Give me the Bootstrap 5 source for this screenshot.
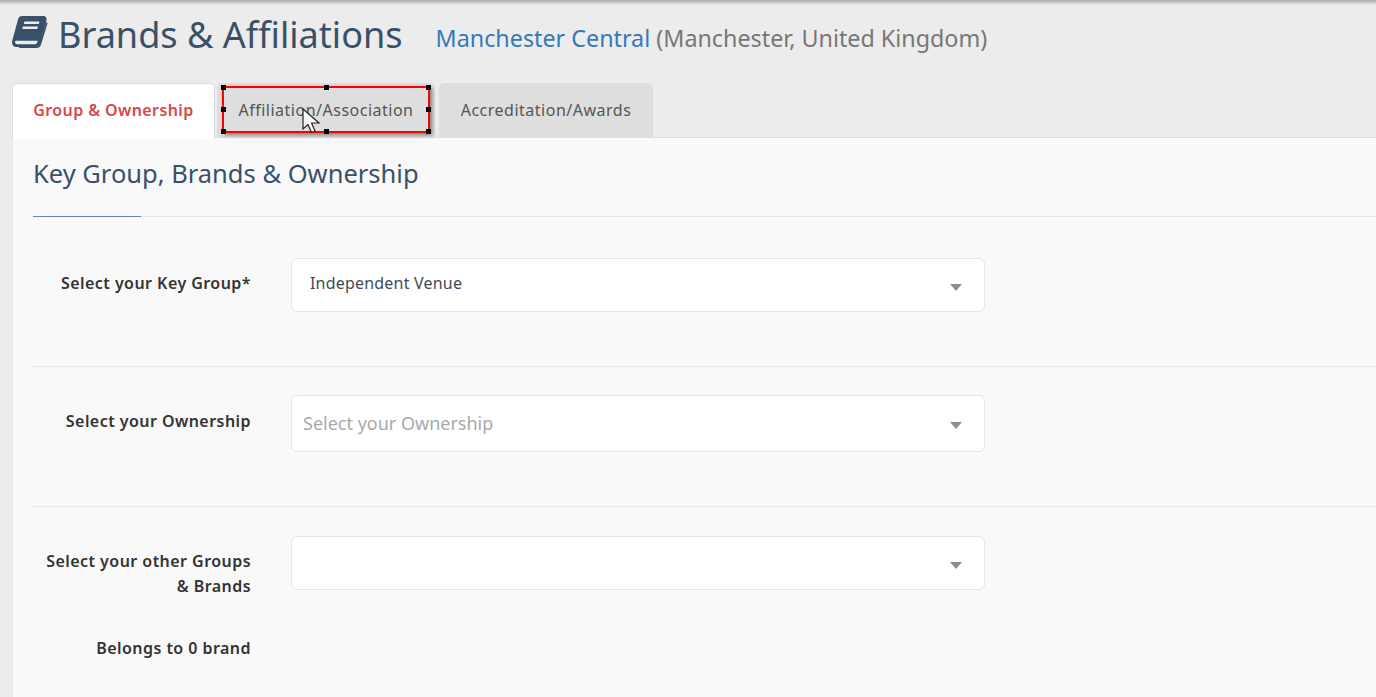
<!DOCTYPE html>
<html>
<head>
    <title>Brands &amp; Affiliations</title>
    <link href="https://cdn.jsdelivr.net/npm/bootstrap@5.3.3/dist/css/bootstrap.min.css" rel="stylesheet" />
    <script src="https://cdn.jsdelivr.net/npm/bootstrap@5.3.3/dist/js/bootstrap.bundle.min.js"></script>
    <style>
        html, body { height: 697px; overflow: hidden; }
        body { background: #ececec; font-family: "Noto Sans", "Open Sans", sans-serif; color: #333; }
        .top-shade { height: 5px; background: linear-gradient(#a9a9a9, #ececec); }
        .page-head { height: 78px; padding-left: 12px; padding-top: 6px; color: #3a5068; }
        .page-head svg { width: 36px; height: 33px; margin-right: 10px; margin-top: 5px; }
        .page-title { font-size: 36.1px; font-weight: 400; margin: 0; line-height: 46px; color: #3a5068; white-space: nowrap; }
        .venue { font-size: 23.3px; margin-left: 33px; margin-top: 10px; color: #777; white-space: nowrap; }
        .venue a { color: #337ab7; text-decoration: none; }
        .tab-strip { margin-left: 12px; border-bottom: 1px solid #ddd; gap: 4px; height: 55px; }
        .tab-strip .nav-link { height: 55px; padding: 0; line-height: 54px; font-size: 16px; letter-spacing: .5px; background: #dedede; color: #555; border: 0; border-radius: 5px 5px 0 0; white-space: nowrap; text-align: center; }
        .tab-strip .nav-link.active { width: 203px; background: #fff; color: #d9474a; font-weight: 600; letter-spacing: .4px; border: 1px solid #ddd; border-bottom: 0; line-height: 53px; height: 56px; }
        .tab-strip .nav-item { position: relative; }
        .tab-strip .tab-wide { margin-left: -2px; }
        .tab-strip .tab-wide .nav-link { width: 218px; }
        .tab-strip .tab-last .nav-link { width: 214px; }
        .mark-box { position: absolute; left: 5px; top: 3px; width: 208px; height: 47px; border: 2px solid #f00; box-shadow: 2px 2px 4px rgba(0,0,0,.45); pointer-events: none; }
        .mark-box i { position: absolute; width: 5px; height: 5px; background: #000; }
        .h-tl { left: -3px; top: -3px; } .h-tm { left: 100px; top: -3px; } .h-tr { right: -3px; top: -3px; }
        .h-ml { left: -3px; top: 19px; } .h-mr { right: -3px; top: 19px; }
        .h-bl { left: -3px; bottom: -3px; } .h-bm { left: 100px; bottom: -3px; } .h-br { right: -3px; bottom: -3px; }
        .cursor-pic { position: absolute; left: 85px; top: 25px; width: 20px; height: 28px; }
        .tab-body { margin-left: 12px; background: #f9f9f9; height: 560px; border-left: 1px solid #e8e8e8; overflow: hidden; }
        .panel-title { font-size: 25.5px; font-weight: 400; color: #3a5068; margin: 0; padding: 16px 0 0 20px; line-height: 38px; height: 78px; white-space: nowrap; }
        .title-rule { border-top: 1px solid #e3e3e3; height: 1px; position: relative; margin-left: 20px; }
        .title-rule::before { content: ""; position: absolute; left: 0; top: -1px; width: 108px; height: 1px; background: #5b87b5; }
        .form-line { border-bottom: 1px solid #e8e8e8; margin-left: 19px; }
        .line-key { height: 150px; padding-top: 41px; }
        .line-own { height: 140px; padding-top: 28px; }
        .line-other { padding-top: 29px; border: 0; }
        .field-label { width: 219px; margin: 13px 40px 0 0; text-align: right; font-weight: 600; font-size: 16px; letter-spacing: .45px; line-height: 25px; color: #333; flex: none; }
        .line-own .field-label { margin-top: 14px; }
        .pick-box { width: 694px; height: 54px; background: #fff; border: 1px solid #e6e6e6; border-radius: 6px; padding: 0 0 0 18px; line-height: 48px; font-size: 16px; letter-spacing: .2px; color: #3f4a55; position: relative; }
        .pick-box::after { content: ""; position: absolute; right: 22px; top: 25px; border: 6.5px solid transparent; border-top: 7px solid #8e8e8e; border-bottom: 0; }
        .pick-tall { height: 57px; padding-left: 11px; line-height: 55px; font-size: 18px; letter-spacing: 0; color: #a9a9a9; }
        .pick-tall::after { top: 26px; }
        .brand-count { margin: 37px 0 0 19px; }
    </style>
</head>
<body>
    <div class="top-shade"></div>
    <div class="page-head d-flex align-items-start">
        <svg viewBox="0 0 36 33" aria-hidden="true"><path fill="#3a5068" d="M10 0h21c3 0 4 2 3.400 4.500l-6 22c-.8 3-3 4.500-6 4.500H4.500C1.500 31 0 29 0 26.500c0-1 .2-1.800.5-2.800L6 3.500C6.600 1.300 8 0 10 0z"/><path fill="#ececec" d="M3.200 25.300c-.6 2 .5 3 2 3h17c1.500 0 2.700-.8 3.200-2.400l.3-1.100H5c-.8 0-1.500 0-1.800.5z"/><path fill="#ececec" d="M12.500 5.500h15l-.7 2.600h-15zM11 10.500h15l-.7 2.600h-15z"/><path fill="#3a5068" d="M34 6l1.600 1-6.700 22c-.6 2-2.300 3-4.400 3H7v-1.800h17.500c1.300 0 2.300-.6 2.700-2z"/></svg>
        <h1 class="page-title">Brands &amp; Affiliations</h1>
        <div class="venue"><a href="#">Manchester Central</a> (Manchester, United Kingdom)</div>
    </div>
    <ul class="nav tab-strip">
        <li class="nav-item"><a class="nav-link active" href="#">Group &amp; Ownership</a></li>
        <li class="nav-item tab-wide">
            <a class="nav-link" href="#">Affiliation/Association</a>
            <div class="mark-box">
                <i class="h-tl"></i><i class="h-tm"></i><i class="h-tr"></i><i class="h-ml"></i><i class="h-mr"></i><i class="h-bl"></i><i class="h-bm"></i><i class="h-br"></i>
            </div>
            <svg class="cursor-pic" viewBox="0 0 20 28" aria-hidden="true"><path fill="#fff" stroke="#222" stroke-width="1.200" d="M1 1v20l5-4.500 3.500 8 3.500-1.500-3.500-8H17z"/></svg>
        </li>
        <li class="nav-item tab-last"><a class="nav-link" href="#">Accreditation/Awards</a></li>
    </ul>
    <div class="tab-body">
        <h2 class="panel-title">Key Group, Brands &amp; Ownership</h2>
        <div class="title-rule"></div>
        <div class="form-line line-key d-flex align-items-start">
            <div class="field-label">Select your Key Group*</div>
            <div class="pick-box">Independent Venue</div>
        </div>
        <div class="form-line line-own d-flex align-items-start">
            <div class="field-label">Select your Ownership</div>
            <div class="pick-box pick-tall">Select your Ownership</div>
        </div>
        <div class="form-line line-other d-flex align-items-start">
            <div class="field-label">Select your other Groups<br>&amp; Brands</div>
            <div class="pick-box"></div>
        </div>
        <div class="brand-count field-label">Belongs to 0 brand</div>
    </div>
</body>
</html>
